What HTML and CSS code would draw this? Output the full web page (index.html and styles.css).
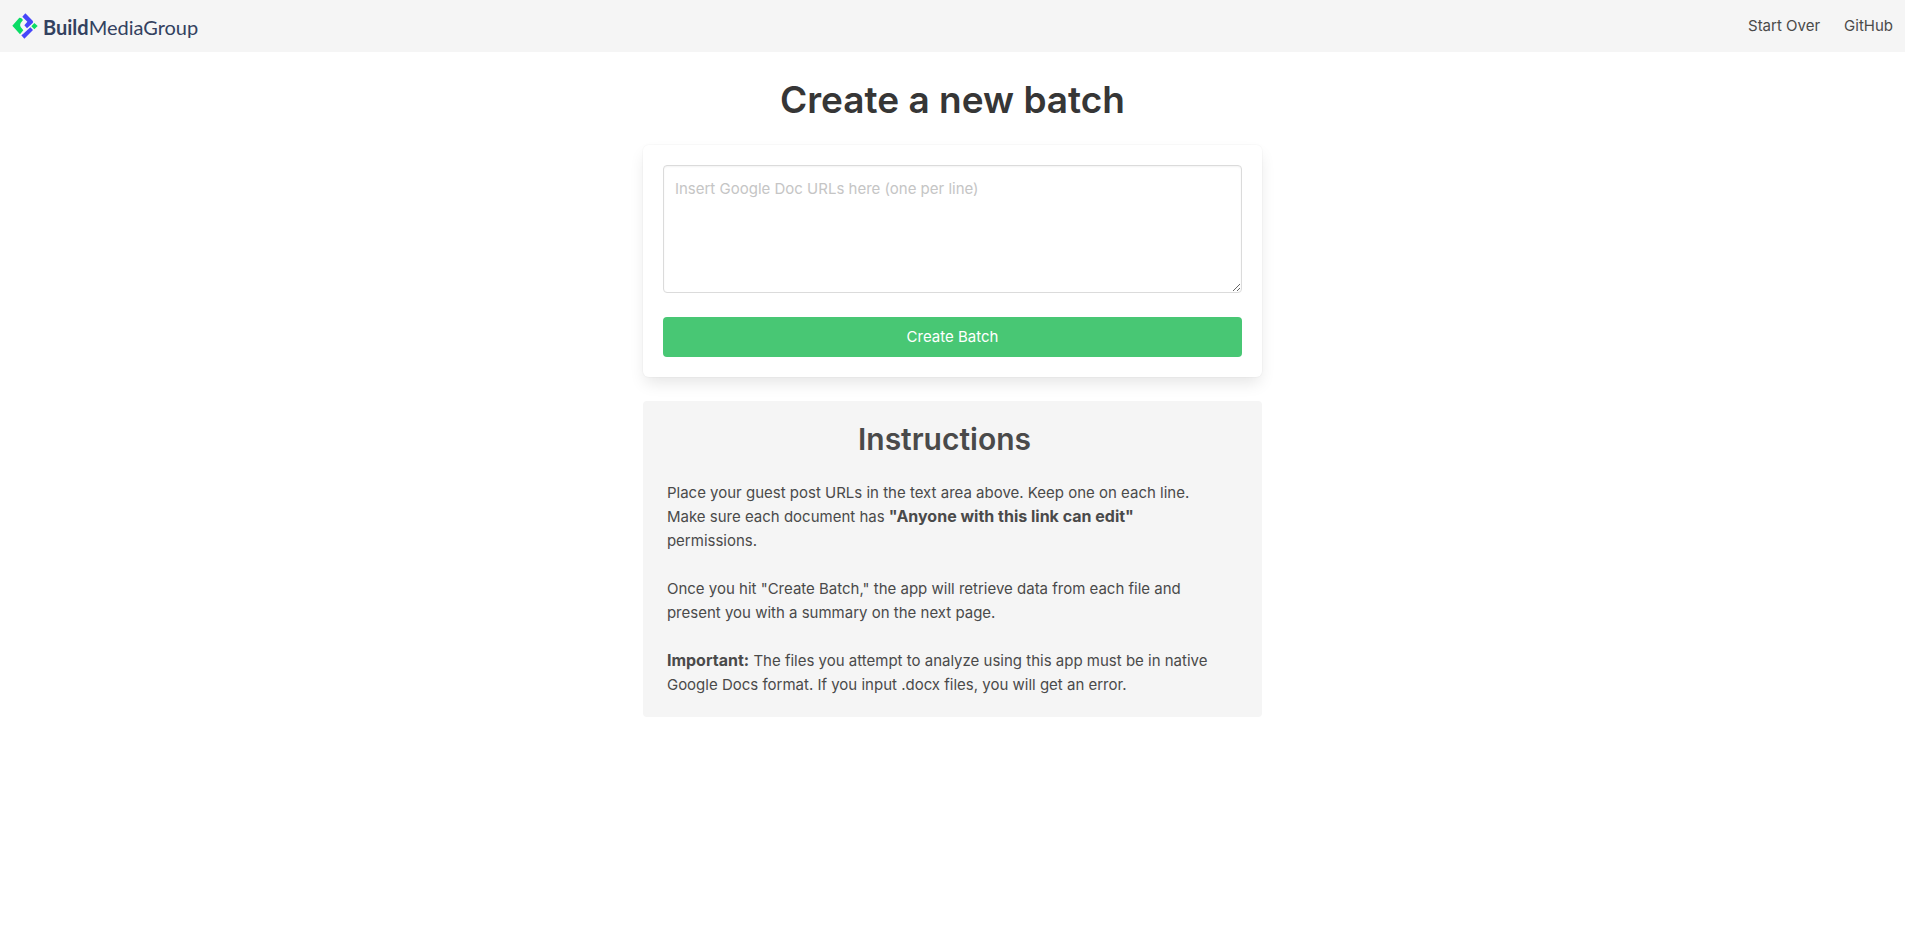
FILE: index.html
```html
<!DOCTYPE html>
<html lang="en">
<head>
<meta charset="utf-8">
<meta name="viewport" content="width=device-width, initial-scale=1">
<title>Create a new batch</title>
<link rel="stylesheet" href="styles.css">
</head>
<body>
<nav class="navbar" aria-label="Main">
  <a class="brand" href="#">
    <svg class="brand-mark" viewBox="36 40 78 78" aria-hidden="true">
      <path fill="#0bdc66" d="M37 78 L58 54 Q64 53 69 61 L62 70 Q58 77 62 82 L70 92 L60 104 Z"/>
      <path fill="#4646fa" d="M76 41 L98 63 Q101 67 98 70 L81 86 L73 77 L82 66 L67 51 Z"/>
      <path fill="#4646fa" d="M91 83 L99 91 L73 117 L64 107 L70 102 Z"/>
      <path fill="#0bdc66" d="M103 70 L113 79 L103 89 L94 80 Z"/>
    </svg>
    <span class="brand-name"><b>Build</b>MediaGroup</span>
  </a>
  <div class="navbar-links">
    <a class="navbar-item" href="#">Start Over</a>
    <a class="navbar-item" href="#">GitHub</a>
  </div>
</nav>
<main class="page">
  <h1 class="title">Create a new batch</h1>
  <form class="box">
    <textarea class="textarea" aria-label="Google Doc URLs" placeholder="Insert Google Doc URLs here (one per line)"></textarea>
    <button class="button" type="button">Create Batch</button>
  </form>
  <section class="notification">
    <h2 class="subtitle">Instructions</h2>
    <p>Place your guest post URLs in the text area above. Keep one on each line.<br>Make sure each document has <strong>"Anyone with this link can edit"</strong><br>permissions.</p>
    <p>Once you hit "Create Batch," the app will retrieve data from each file and<br>present you with a summary on the next page.</p>
    <p><strong>Important:</strong> The files you attempt to analyze using this app must be in native Google Docs format. If you input .docx files, you will get an error.</p>
  </section>
</main>
</body>
</html>
```
FILE: styles.css
```css
*, *::before, *::after { box-sizing: border-box; }
body {
  margin: 0;
  background: #fff;
  color: #4a4a4a;
  font-family: Inter, "Liberation Sans", sans-serif;
  font-size: 15px;
  line-height: 24px;
}
h1, h2, p { margin: 0; }
a { color: inherit; text-decoration: none; }
strong { font-size: 16px; line-height: 20px; }
.navbar {
  display: flex;
  justify-content: space-between;
  min-height: 52px;
  background: #f5f5f5;
}
.brand {
  display: flex;
  align-items: center;
  gap: 5px;
  padding: 0 12px;
}
.brand-mark { width: 26px; height: 26px; }
.brand-name {
  color: #33415f;
  font-family: Lato, sans-serif;
  font-size: 20px;
  line-height: 28px;
  padding-top: 1px;
}
.brand-name b { font-weight: 700; }
.navbar-links { display: flex; }
.navbar-item {
  display: flex;
  align-items: center;
  padding: 8px 12px;
}
.page {
  display: flex;
  flex-direction: column;
  gap: 24px;
  width: 32.5%;
  margin: 0 auto;
  padding: 26px 0;
}
.title {
  color: #363636;
  font-size: 37px;
  font-weight: 600;
  line-height: 43px;
  text-align: center;
}
.box {
  display: flex;
  flex-direction: column;
  gap: 24px;
  padding: 20px;
  border-radius: 6px;
  background: #fff;
  box-shadow: 0 8px 16px -2px rgba(10, 10, 10, .1), 0 0 0 1px rgba(10, 10, 10, .02);
}
.textarea {
  display: block;
  width: 100%;
  min-height: 128px;
  padding: 11px;
  border: 1px solid #dbdbdb;
  border-radius: 4px;
  background: #fff;
  box-shadow: inset 0 1px 2px rgba(10, 10, 10, .05);
  color: #363636;
  font: inherit;
  resize: vertical;
}
.textarea::placeholder { color: #c5c5c5; }
.button {
  height: 40px;
  border: 0;
  border-radius: 4px;
  background: #48c774;
  color: #fff;
  font: inherit;
  cursor: pointer;
}
.notification {
  display: flex;
  flex-direction: column;
  gap: 24px;
  padding: 20px 40px 20px 24px;
  border-radius: 4px;
  background: #f5f5f5;
}
.subtitle {
  font-size: 30px;
  font-weight: 600;
  line-height: 36px;
  text-align: center;
}
```
